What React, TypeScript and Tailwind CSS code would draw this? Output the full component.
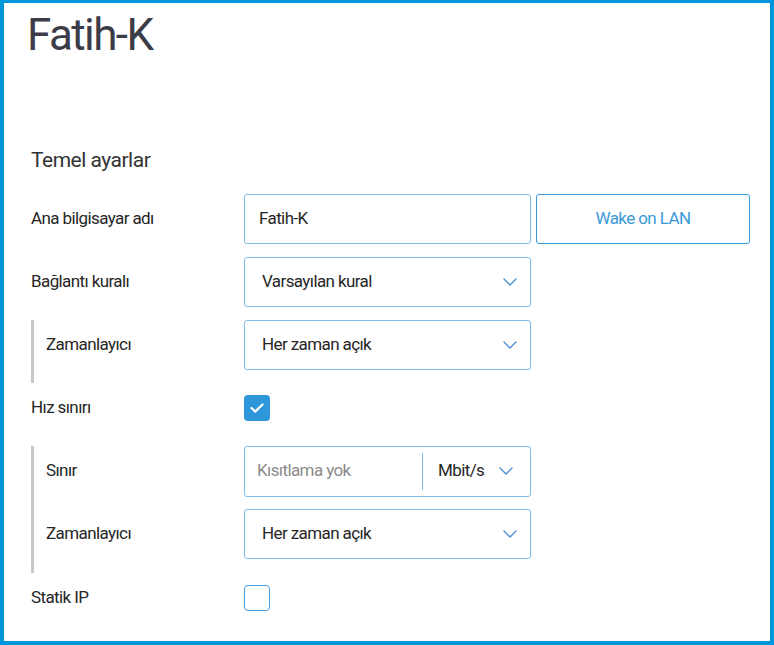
import React from "react";

// ─── Host settings ────────────────────────────────────────────────────────────

const Chevron = () => (
  <svg width="14" height="8" viewBox="0 0 14 8" fill="none" className="shrink-0">
    <path d="M1 1l6 6 6-6" stroke="#4a90d0" strokeWidth="1.4" strokeLinecap="round" strokeLinejoin="round" />
  </svg>
);

const Label: React.FC<{ children: React.ReactNode; nested?: boolean }> = ({ children, nested }) => (
  <div className={`w-[213px] shrink-0 text-[17px] tracking-[-0.6px] text-[#262626] ${nested ? "pl-[15px]" : ""}`}>
    {children}
  </div>
);

const Select: React.FC<{ value: string }> = ({ value }) => (
  <div className="flex h-[50px] w-[287px] items-center justify-between rounded-[3px] border border-[#7fbde8] pl-[17px] pr-[13px] text-[17px] tracking-[-0.6px] text-[#262626]">
    <span>{value}</span>
    <Chevron />
  </div>
);

const Checkbox: React.FC<{ checked?: boolean }> = ({ checked }) => (
  <div
    className={`flex h-[26px] w-[26px] items-center justify-center rounded-[4px] ${
      checked ? "bg-[#2e96da]" : "border-[1.5px] border-[#4a9ee0] bg-white"
    }`}
  >
    {checked && (
      <svg width="14" height="10" viewBox="0 0 14 10" fill="none">
        <path d="M1.5 5l3.8 3.6L12.5 1.5" stroke="white" strokeWidth="2.2" strokeLinecap="round" strokeLinejoin="round" />
      </svg>
    )}
  </div>
);

export default function App() {
  return (
    <div
      className="h-[645px] w-[774px] overflow-hidden border-[#0096dc] border-t-[3px] border-l-[4px] border-r-[4px] border-b-[4px] bg-white"
      style={{ fontFamily: "Roboto, 'Liberation Sans', sans-serif" }}
    >
      <div className="pl-[23px]">
        <h1 className="mt-[2px] text-[44px] leading-[60px] tracking-[-1.6px] text-[#3c3b48]">Fatih-K</h1>

        <h2 className="mt-[80px] pl-[4px] text-[21px] tracking-[-0.5px] text-[#333]">Temel ayarlar</h2>

        <div className="mt-[17px] flex flex-col pl-[4px]">
          {/* Host name */}
          <div className="flex items-center">
            <Label>Ana bilgisayar adı</Label>
            <div className="flex gap-[5px]">
              <div className="flex h-[50px] w-[287px] items-center rounded-[3px] border border-[#7fbde8] pl-[14px] text-[17px] tracking-[-0.6px] text-[#262626]">
                Fatih-K
              </div>
              <button className="h-[50px] w-[214px] rounded-[3px] border border-[#3a9ad9] text-[17px] tracking-[-0.6px] text-[#3a9ad9]">
                Wake on LAN
              </button>
            </div>
          </div>

          {/* Connection rule */}
          <div className="mt-[13px] flex items-center">
            <Label>Bağlantı kuralı</Label>
            <Select value="Varsayılan kural" />
          </div>

          <div className="mt-[13px] flex items-stretch">
            <div className="w-[3px] bg-[#c8c8cc]" />
            <div className="flex flex-1 flex-col pb-[13px]">
              <div className="-ml-[3px] flex items-center">
                <Label nested>Zamanlayıcı</Label>
                <Select value="Her zaman açık" />
              </div>
            </div>
          </div>

          {/* Speed limit */}
          <div className="flex h-[50px] items-center">
            <Label>Hız sınırı</Label>
            <Checkbox checked />
          </div>

          <div className="mt-[13px] flex items-stretch">
            <div className="w-[3px] bg-[#c8c8cc]" />
            <div className="flex flex-1 flex-col gap-[12px] pb-[14px]">
              <div className="-ml-[3px] flex items-center">
                <Label nested>Sınır</Label>
                <div className="flex h-[51px] w-[287px] items-center rounded-[3px] border border-[#7fbde8] text-[17px] tracking-[-0.6px]">
                  <span className="w-[177px] pl-[12px] text-[#8a8a8a]">Kısıtlama yok</span>
                  <div className="h-[37px] w-px bg-[#7fbde8]" />
                  <span className="flex-1 pl-[15px] text-[#262626]">Mbit/s</span>
                  <span className="pr-[17px]">
                    <Chevron />
                  </span>
                </div>
              </div>
              <div className="-ml-[3px] flex items-center">
                <Label nested>Zamanlayıcı</Label>
                <Select value="Her zaman açık" />
              </div>
            </div>
          </div>

          {/* Static IP */}
          <div className="flex h-[50px] items-center">
            <Label>Statik IP</Label>
            <Checkbox />
          </div>
        </div>
      </div>
    </div>
  );
}
